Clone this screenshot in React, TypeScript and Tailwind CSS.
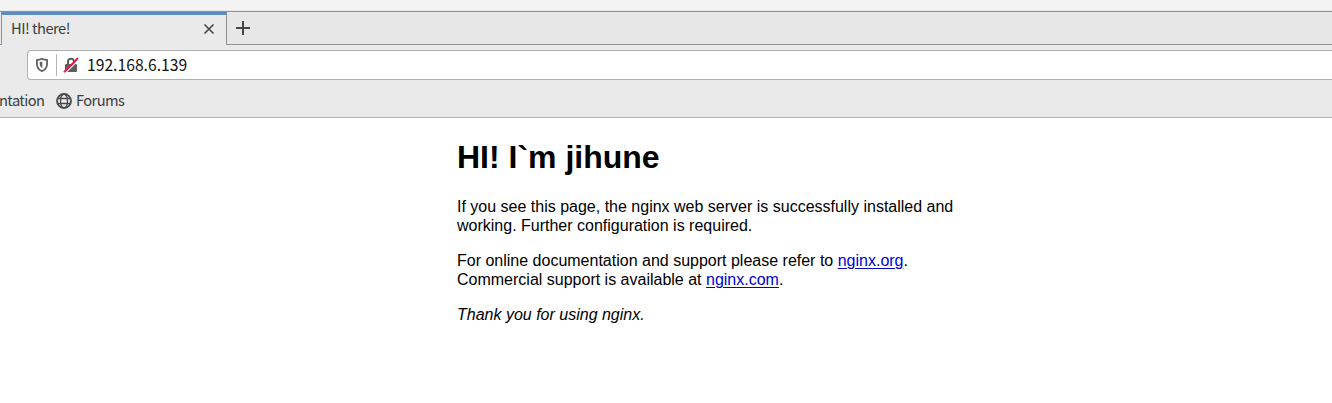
function Tab() {
  return (
    <div className="ml-px flex h-[33px] w-[226px] items-center justify-between border-x border-t-[3px] border-x-[#929292] border-t-[#5b8bbf] bg-[#eaeaea] pr-[11px] pl-[9px]">
      <span className="-mt-[5px] text-[14.667px] leading-5 tracking-[-0.5px] text-[#3c3f41]">HI! there!</span>
      <svg className="-mt-[3px] size-3" viewBox="0 0 12 12" fill="none" stroke="#464646" strokeWidth="1.6">
        <path d="M1.5 1.5l9 9M10.5 1.5l-9 9" />
      </svg>
    </div>
  );
}

function Shield() {
  return (
    <svg className="size-4" viewBox="0 0 16 16">
      <path d="M8 1.800c1.700.8 3.300 1.100 5.100 1.200v3.800c0 3.300-1.800 6-5.100 7.500-3.300-1.500-5.100-4.200-5.100-7.500V3C4.700 2.900 6.300 2.600 8 1.800z" fill="none" stroke="#626262" strokeWidth="1.800" strokeLinejoin="round" />
      <path d="M8.300 4.500v6.800C6.500 10.200 5.700 8.700 5.700 6.800V5.100c.9-.1 1.800-.3 2.600-.6z" fill="#626262" />
    </svg>
  );
}

function InsecureLock() {
  return (
    <svg className="size-4" viewBox="0 0 16 16" fill="none">
      <path d="M5 8V4.800a3 3 0 0 1 6 0V8" stroke="#5d5d5d" strokeWidth="2" />
      <rect x="2" y="7" width="12" height="8" rx="1.200" fill="#5d5d5d" />
      <path d="M2.600 15.800L15.600 2.800" stroke="#fff" strokeWidth="1.200" />
      <path d="M1.500 14.600L14.400 1.700" stroke="#dc1f4e" strokeWidth="2" strokeLinecap="round" />
    </svg>
  );
}

function Globe() {
  return (
    <svg className="size-4" viewBox="0 0 16 16" fill="none" stroke="#484b4d" strokeWidth="1.800">
      <circle cx="8" cy="8" r="7" />
      <ellipse cx="8" cy="8" rx="3.500" ry="7" strokeWidth="1.300" />
      <path d="M1.500 5.500h13M1.500 10.500h13" strokeWidth="1.300" />
    </svg>
  );
}

export default function App() {
  return (
    <div className="h-[403px] w-full overflow-hidden bg-white font-['Noto_Sans_CJK_KR',sans-serif]">
      <div className="h-[11px] border-b border-[#e6e6e6] bg-[#f3f3f3]" />
      <div className="flex h-[34px] border-y border-[#929292] bg-[#e7e7e7]">
        <Tab />
        <div className="flex h-8 w-8 items-center justify-center">
          <svg className="size-4" viewBox="0 0 16 16" stroke="#464646" strokeWidth="2">
            <path d="M8 1v14M1 8h14" />
          </svg>
        </div>
      </div>
      <div className="h-[73px] border-b border-[#b2b2b2] bg-[#eaeaea] pt-[5px]">
        <div className="ml-[27px] flex h-[30px] items-center rounded-l-[4px] border border-r-0 border-[#b2b2b2] bg-white pl-[6px]">
          <Shield />
          <div className="ml-[6px] h-[22px] w-px bg-[#b5b5b5]" />
          <div className="ml-[6px] flex">
            <InsecureLock />
          </div>
          <span className="-mt-px ml-2 text-[15.700px] leading-5 text-[#111]">192.168.6.139</span>
        </div>
        <div className="flex h-[37px] items-center pt-[5px] text-[14.667px] leading-5 tracking-[-0.6px] text-[#3c3f41]">
          <span className="-mt-0.5 -ml-px w-[45px] shrink-0 whitespace-nowrap">ntation</span>
          <div className="ml-3 flex items-center gap-1">
            <Globe />
            <span className="-mt-0.5">Forums</span>
          </div>
        </div>
      </div>
      <main className="ml-[457px] w-[560px] pt-[21px] font-['Liberation_Sans',Arial,sans-serif] text-[16px] leading-[19px] text-black">
        <h1 className="text-[32px] leading-[37px] font-bold">HI! I`m jihune</h1>
        <p className="mt-[21px]">
          If you see this page, the nginx web server is successfully installed and
          <br />
          working. Further configuration is required.
        </p>
        <p className="mt-4">
          For online documentation and support please refer to{" "}
          <a className="text-[#0000d0] underline underline-offset-2" href="#org">nginx.org</a>.
          <br />
          Commercial support is available at{" "}
          <a className="text-[#0000d0] underline underline-offset-2" href="#com">nginx.com</a>.
        </p>
        <p className="mt-4">
          <em>Thank you for using nginx.</em>
        </p>
      </main>
    </div>
  );
}
